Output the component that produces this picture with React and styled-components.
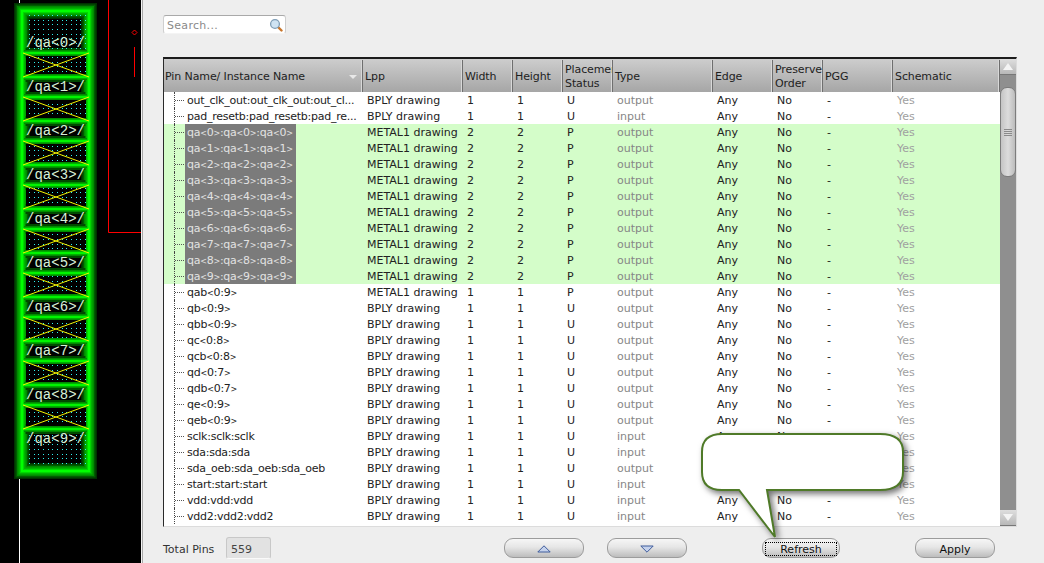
import React from 'react';
import styled, { createGlobalStyle } from 'styled-components';

const GlobalStyle = createGlobalStyle`
  html, body {
    margin: 0;
    padding: 0;
    background: #eeeeee;
    overflow: hidden;
  }
  body {
    font-family: "DejaVu Sans", sans-serif;
    font-size: 11px;
    color: #222;
  }
`;

const COLUMNS = '199px 100px 50px 50px 50px 100px 60px 50px 70px 107px';

const HEADERS = [
  'Pin Name/ Instance Name',
  'Lpp',
  'Width',
  'Height',
  'Placement\nStatus',
  'Type',
  'Edge',
  'Preserve\nOrder',
  'PGG',
  'Schematic',
];

const bply = (name, type) => ({ name, type, lpp: 'BPLY drawing', size: 1, status: 'U' });
const metal = (i) => ({
  name: `qa<${i}>:qa<${i}>:qa<${i}>`,
  type: 'output',
  lpp: 'METAL1 drawing',
  size: 2,
  status: 'P',
  selected: true,
});

const ROWS = [
  bply('out_clk_out:out_clk_out:out_cl...', 'output'),
  bply('pad_resetb:pad_resetb:pad_re...', 'input'),
  ...[0, 1, 2, 3, 4, 5, 6, 7, 8, 9].map(metal),
  { name: 'qab<0:9>', type: 'output', lpp: 'METAL1 drawing', size: 1, status: 'P' },
  bply('qb<0:9>', 'output'),
  bply('qbb<0:9>', 'output'),
  bply('qc<0:8>', 'output'),
  bply('qcb<0:8>', 'output'),
  bply('qd<0:7>', 'output'),
  bply('qdb<0:7>', 'output'),
  bply('qe<0:9>', 'output'),
  bply('qeb<0:9>', 'output'),
  bply('sclk:sclk:sclk', 'input'),
  bply('sda:sda:sda', 'input'),
  bply('sda_oeb:sda_oeb:sda_oeb', 'output'),
  bply('start:start:start', 'input'),
  bply('vdd:vdd:vdd', 'input'),
  bply('vdd2:vdd2:vdd2', 'input'),
];

const PINS = [0, 1, 2, 3, 4, 5, 6, 7, 8, 9];
const DOT_STEPS = [1, 6, 10];

// the brackets are drawn much narrower in the original tool font
const renderName = (name) =>
  name.split(/([<>])/).map((part, i) => (i % 2 ? <Bracket key={i}>{part}</Bracket> : part));

function PinGlow() {
  const bars = PINS.slice(0, 9)
    .flatMap((i) => [53 + i * 44, 77 + i * 44])
    .map((y) => `M22 ${y} H89`)
    .join(' ');
  const frame = 'M22 11 H89 V471 H22 Z';

  return (
    <g fill="none">
      <path d={frame} stroke="#003000" strokeWidth="16" />
      <path d={frame} stroke="#005c00" strokeWidth="13" />
      <path d={frame} stroke="#008a00" strokeWidth="10" />
      <path d={bars} stroke="#004a00" strokeWidth="10" />
      <path d={frame} stroke="#00b400" strokeWidth="7" />
      <path d={bars} stroke="#008a00" strokeWidth="6" />
      <path d={frame} stroke="#00d800" strokeWidth="4" />
      <path d={bars} stroke="#00d000" strokeWidth="3" />
      <path d={frame} stroke="#00ff00" strokeWidth="2" />
      <path d={bars} stroke="#00ff00" strokeWidth="1.5" />
    </g>
  );
}

function LayoutCanvas() {
  return (
    <Canvas>
      <svg width="141" height="563" viewBox="0 0 141 563">
        <defs>
          <pattern id="pin-dots" width="14" height="14" patternUnits="userSpaceOnUse">
            {DOT_STEPS.flatMap((x) =>
              DOT_STEPS.map((y) => (
                <rect key={`${x}-${y}`} x={x} y={y} width="1" height="1" fill="#30f0f0" />
              ))
            )}
          </pattern>
        </defs>

        <path d="M19.5 0 V6 M19.5 474 V563" stroke="#fff" strokeWidth="1" />
        <path d="M108.5 0 V232.5 H141" stroke="#ff0000" fill="none" />
        <path d="M134.5 47 V77" stroke="#ff0000" />
        <path d="M134.5 30 L137 32.5 L134.5 35 L132 32.5 Z" stroke="#ff0000" fill="none" />

        <rect x="22" y="11" width="67" height="460" fill="#000" />
        <PinGlow />

        <rect x="26" y="15" width="60" height="34" fill="url(#pin-dots)" />
        <rect x="26" y="435" width="60" height="33" fill="url(#pin-dots)" />

        {PINS.slice(0, 9).map((i) => (
          <g key={i}>
            <rect x="26" y={56 + i * 44} width="60" height="18" fill="#000" />
            <rect x="26" y={56 + i * 44} width="60" height="18" fill="url(#pin-dots)" />
            <path
              d={`M23 ${53 + i * 44} L89 ${77 + i * 44} M89 ${53 + i * 44} L23 ${77 + i * 44}`}
              stroke="#f2f200"
              strokeWidth="1"
            />
          </g>
        ))}

        {PINS.map((i) => (
          <PinLabel key={i} x="26" y={47 + i * 44} textLength="59">
            {`/qa<${i}>/`}
          </PinLabel>
        ))}
      </svg>
    </Canvas>
  );
}

function SearchIcon() {
  return (
    <svg width="14" height="14" viewBox="0 0 14 14">
      <path d="M8.5 8.5 L12.5 12.5" stroke="#c8752a" strokeWidth="2.4" strokeLinecap="round" />
      <circle cx="6" cy="6" r="4.4" fill="#cfe3f2" stroke="#7f9db5" strokeWidth="1.3" />
    </svg>
  );
}

function NavArrow({ up }) {
  return (
    <svg width="14" height="8" viewBox="0 0 14 8">
      <path
        d={up ? 'M7 0.8 L13.2 7 H0.8 Z' : 'M0.8 1 H13.2 L7 7.2 Z'}
        fill="#c5d2ec"
        stroke="#3f5c9c"
        strokeWidth="1"
      />
    </svg>
  );
}

function Bubble() {
  return (
    <BubbleArt width="230" height="120" viewBox="695 428 230 120">
      <path
        d="M722 434 H880 Q903 434 903 452 V472 Q903 490 880 490 H767 L775 537 L739 490 H722 Q702 490 702 472 V452 Q702 434 722 434 Z"
        fill="#fff"
        stroke="#4f7a28"
        strokeWidth="2"
      />
    </BubbleArt>
  );
}

function App() {
  return (
    <Page>
      <GlobalStyle />
      <LayoutCanvas />
      <Divider />
      <Panel>
        <SearchBox>
          <SearchHint>Search...</SearchHint>
          <SearchIcon />
        </SearchBox>

        <TableFrame>
          <TableMain>
            <HeaderRow>
              {HEADERS.map((label) => (
                <HeaderCell key={label}>
                  {label}
                  {label.startsWith('Pin') && <SortArrow />}
                </HeaderCell>
              ))}
            </HeaderRow>
            <TableBody>
              {ROWS.map((row) => (
                <Row key={row.name} $selected={row.selected}>
                  <NameCell>
                    <Branch />
                    <NameText $selected={row.selected}>{renderName(row.name)}</NameText>
                  </NameCell>
                  <Cell>{row.lpp}</Cell>
                  <Cell>{row.size}</Cell>
                  <Cell>{row.size}</Cell>
                  <Cell>{row.status}</Cell>
                  <Cell $muted>{row.type}</Cell>
                  <Cell>Any</Cell>
                  <Cell>No</Cell>
                  <Cell>-</Cell>
                  <Cell $faint>Yes</Cell>
                </Row>
              ))}
            </TableBody>
          </TableMain>
          <Scrollbar>
            <ScrollButton>
              <ScrollArrow $up />
            </ScrollButton>
            <ScrollTrack>
              <ScrollThumb>
                <ThumbGrip />
              </ScrollThumb>
            </ScrollTrack>
            <ScrollButton>
              <ScrollArrow />
            </ScrollButton>
          </Scrollbar>
        </TableFrame>

        <Footer>
          <TotalLabel>Total Pins</TotalLabel>
          <TotalField>559</TotalField>
          <PushButton $width={80} $left={233}>
            <NavArrow up />
          </PushButton>
          <PushButton $width={80} $left={23}>
            <NavArrow />
          </PushButton>
          <PushButton $width={78} $left={75}>
            <FocusRing>Refresh</FocusRing>
          </PushButton>
          <PushButton $width={80} $left={75}>
            Apply
          </PushButton>
        </Footer>
      </Panel>
      <Bubble />
    </Page>
  );
}

const Page = styled.div`
  position: relative;
  display: flex;
  width: 1044px;
  height: 563px;
  overflow: hidden;
  background: #eeeeee;
`;

const Canvas = styled.div`
  width: 141px;
  height: 563px;
  flex: none;
  background: #000;
  svg {
    display: block;
  }
`;

const PinLabel = styled.text`
  font-family: "Liberation Mono", monospace;
  font-size: 14px;
  fill: #d8f0d8;
`;

const Divider = styled.div`
  width: 2px;
  flex: none;
  border-left: 1px solid #f4f4f4;
  background: #a8a8a8;
  box-sizing: border-box;
`;

const Panel = styled.div`
  flex: 1;
  display: flex;
  flex-direction: column;
  padding: 15px 27px 0 20px;
`;

const SearchBox = styled.div`
  width: 123px;
  height: 19px;
  box-sizing: border-box;
  display: flex;
  align-items: center;
  justify-content: space-between;
  padding: 0 2px 0 3px;
  background: #fff;
  border: 1px solid #cfcfcf;
  border-top-color: #a9a9a9;
  border-bottom-color: #f4f4f4;
  border-radius: 3px;
`;

const SearchHint = styled.span`
  padding-top: 1px;
  color: #8a8a8a;
  letter-spacing: 0.3px;
`;

const TableFrame = styled.div`
  margin-top: 23px;
  width: 854px;
  height: 470px;
  box-sizing: border-box;
  display: flex;
  background: #fff;
  border-top: 2px solid #1c1c1c;
  border-left: 1px solid #2a2a2a;
  border-right: 1px solid #dcdcdc;
  border-bottom: 1px solid #dcdcdc;
`;

const TableMain = styled.div`
  width: 836px;
  flex: none;
  display: flex;
  flex-direction: column;
  overflow: hidden;
`;

const HeaderRow = styled.div`
  height: 33px;
  flex: none;
  display: grid;
  grid-template-columns: ${COLUMNS};
  background: linear-gradient(#cdcdcd, #a6a6a6);
`;

const HeaderCell = styled.div`
  position: relative;
  display: flex;
  align-items: center;
  padding: 2px 0 0 2px;
  margin-top: 1px;
  white-space: pre;
  overflow: hidden;
  line-height: 14px;
  letter-spacing: -0.1px;
  color: #1e1e1e;
  border-right: 1px solid #6f6f6f;
  box-shadow: inset -1px 0 0 #d8d8d8;
  &:first-child {
    padding-left: 1px;
  }
`;

const SortArrow = styled.span`
  position: absolute;
  right: 5px;
  top: 15px;
  border-left: 4px solid transparent;
  border-right: 4px solid transparent;
  border-top: 4px solid #e8e8e8;
`;

const TableBody = styled.div`
  flex: 1;
  overflow: hidden;
`;

const Row = styled.div`
  height: 16px;
  display: grid;
  grid-template-columns: ${COLUMNS};
  grid-template-rows: 16px;
  line-height: 18px;
  background: ${(p) => (p.$selected ? '#d4fdc9' : '#fff')};
`;

const Cell = styled.div`
  padding-left: 4px;
  white-space: nowrap;
  overflow: hidden;
  color: ${(p) => (p.$muted ? '#868686' : p.$faint ? '#a0a0a0' : '#222')};
`;

const NameCell = styled.div`
  display: flex;
  align-items: stretch;
  padding-left: 10px;
  white-space: nowrap;
  overflow: hidden;
`;

const Branch = styled.span`
  width: 10px;
  flex: none;
  border-left: 1px dotted #444;
  background: linear-gradient(90deg, #555 50%, transparent 50%) 0 8px / 2px 1px repeat-x;
`;

const NameText = styled.span`
  padding: 0 3px 0 2px;
  letter-spacing: -0.25px;
  color: ${(p) => (p.$selected ? '#e2e2e2' : '#222')};
  background: ${(p) => (p.$selected ? '#7b7b7b' : 'transparent')};
`;

const Bracket = styled.span`
  font-size: 8px;
`;

const Scrollbar = styled.div`
  flex: 1;
  display: flex;
  flex-direction: column;
  background: #8f8f8f;
`;

const ScrollButton = styled.div`
  height: 16px;
  flex: none;
  display: flex;
  align-items: center;
  justify-content: center;
  background: linear-gradient(#dedede, #b8b8b8);
  border-bottom: 1px solid #777;
  box-sizing: border-box;
`;

const ScrollArrow = styled.span`
  border-left: 5px solid transparent;
  border-right: 5px solid transparent;
  ${(p) => (p.$up ? 'border-bottom: 7px solid #f4f4f4;' : 'border-top: 7px solid #f4f4f4;')}
`;

const ScrollTrack = styled.div`
  flex: 1;
  padding-top: 12px;
`;

const ScrollThumb = styled.div`
  height: 90px;
  box-sizing: border-box;
  display: flex;
  align-items: center;
  justify-content: center;
  border: 1px solid #7c7c7c;
  border-radius: 7px;
  background: linear-gradient(90deg, #c4c4c4, #dcdcdc 50%, #bcbcbc);
`;

const ThumbGrip = styled.span`
  width: 8px;
  height: 7px;
  background: repeating-linear-gradient(#8a8a8a 0 1px, transparent 1px 2px);
`;

const Footer = styled.div`
  display: flex;
  align-items: center;
  height: 22px;
  margin-top: 10px;
`;

const TotalLabel = styled.span`
  width: 63px;
  flex: none;
  padding-top: 2px;
  color: #333;
`;

const TotalField = styled.div`
  width: 45px;
  height: 22px;
  flex: none;
  box-sizing: border-box;
  padding: 5px 0 0 4px;
  background: #e2e2e2;
  color: #444;
  border: 1px solid #c8c8c8;
  border-bottom-color: #fafafa;
  border-radius: 3px;
`;

const PushButton = styled.div`
  width: ${(p) => p.$width}px;
  margin-left: ${(p) => p.$left}px;
  height: 20px;
  flex: none;
  box-sizing: border-box;
  display: flex;
  align-items: center;
  justify-content: center;
  padding: 3px 2px 1px;
  color: #111;
  border: 1px solid #9c9c9c;
  border-radius: 9px;
  background: linear-gradient(#f6f6f6, #e6e6e6 45%, #bdbdbd);
`;

const FocusRing = styled.span`
  flex: 1;
  align-self: stretch;
  display: flex;
  align-items: center;
  justify-content: center;
  border: 1px dotted #000;
`;

const BubbleArt = styled.svg`
  position: absolute;
  left: 695px;
  top: 428px;
  overflow: visible;
  filter: drop-shadow(3px 3px 3px rgba(0, 0, 0, 0.55));
`;

export default App;
